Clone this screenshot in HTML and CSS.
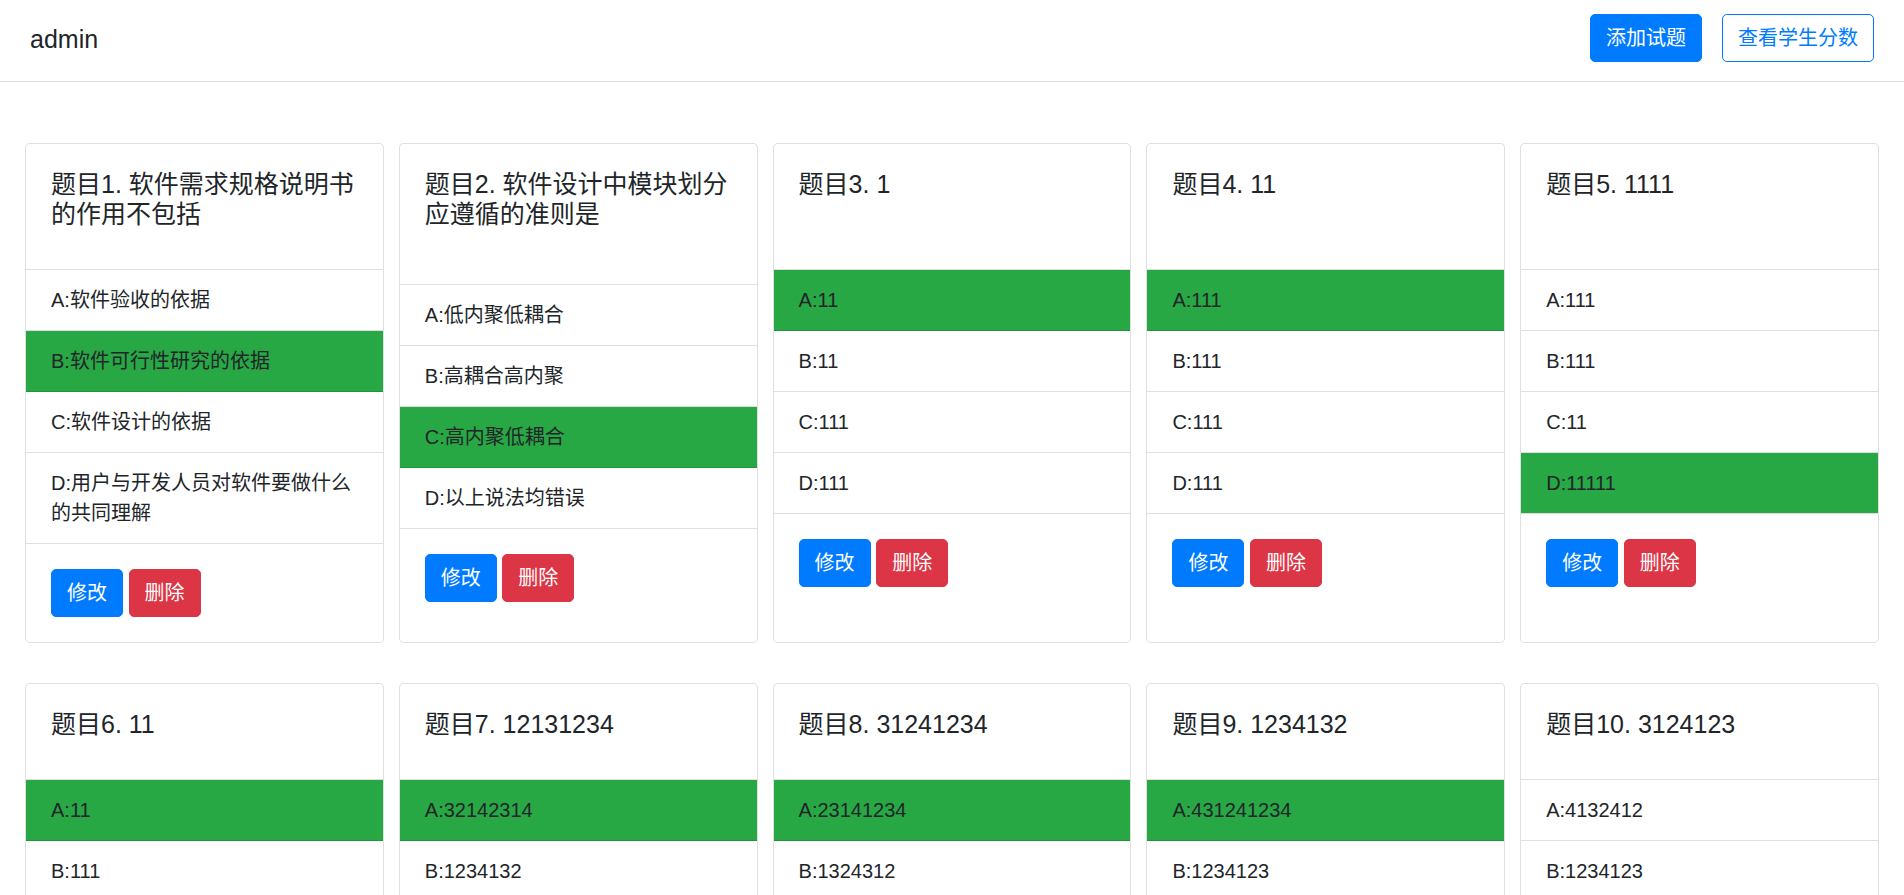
FILE: index.html
```html
<!DOCTYPE html>
<html lang="zh-CN">
<head>
<meta charset="utf-8">
<title>admin</title>
<link rel="stylesheet" href="styles.css">
</head>
<body>
<header class="topbar">
  <div class="brand">admin</div>
  <nav class="actions">
    <button class="btn btn-primary">添加试题</button>
    <button class="btn btn-outline">查看学生分数</button>
  </nav>
</header>
<main class="board">
  <section class="card">
    <div class="card-body"><h5 class="card-title two">题目1. 软件需求规格说明书的作用不包括</h5></div>
    <ul class="options">
      <li class="opt">A:软件验收的依据</li>
      <li class="opt right">B:软件可行性研究的依据</li>
      <li class="opt">C:软件设计的依据</li>
      <li class="opt">D:用户与开发人员对软件要做什么的共同理解</li>
    </ul>
    <div class="card-body"><button class="btn btn-primary">修改</button> <button class="btn btn-danger">删除</button></div>
  </section>
  <section class="card">
    <div class="card-body"><h5 class="card-title twohalf">题目2. 软件设计中模块划分应遵循的准则是</h5></div>
    <ul class="options">
      <li class="opt">A:低内聚低耦合</li>
      <li class="opt">B:高耦合高内聚</li>
      <li class="opt right">C:高内聚低耦合</li>
      <li class="opt">D:以上说法均错误</li>
    </ul>
    <div class="card-body"><button class="btn btn-primary">修改</button> <button class="btn btn-danger">删除</button></div>
  </section>
  <section class="card">
    <div class="card-body"><h5 class="card-title two">题目3. 1</h5></div>
    <ul class="options">
      <li class="opt right">A:11</li>
      <li class="opt">B:11</li>
      <li class="opt">C:111</li>
      <li class="opt">D:111</li>
    </ul>
    <div class="card-body"><button class="btn btn-primary">修改</button> <button class="btn btn-danger">删除</button></div>
  </section>
  <section class="card">
    <div class="card-body"><h5 class="card-title two">题目4. 11</h5></div>
    <ul class="options">
      <li class="opt right">A:111</li>
      <li class="opt">B:111</li>
      <li class="opt">C:111</li>
      <li class="opt">D:111</li>
    </ul>
    <div class="card-body"><button class="btn btn-primary">修改</button> <button class="btn btn-danger">删除</button></div>
  </section>
  <section class="card">
    <div class="card-body"><h5 class="card-title two">题目5. 1111</h5></div>
    <ul class="options">
      <li class="opt">A:111</li>
      <li class="opt">B:111</li>
      <li class="opt">C:11</li>
      <li class="opt right">D:11111</li>
    </ul>
    <div class="card-body"><button class="btn btn-primary">修改</button> <button class="btn btn-danger">删除</button></div>
  </section>

  <section class="card">
    <div class="card-body"><h5 class="card-title">题目6. 11</h5></div>
    <ul class="options">
      <li class="opt right">A:11</li>
      <li class="opt">B:111</li>
    </ul>
    <div class="card-body"><button class="btn btn-primary">修改</button> <button class="btn btn-danger">删除</button></div>
  </section>
  <section class="card">
    <div class="card-body"><h5 class="card-title">题目7. 12131234</h5></div>
    <ul class="options">
      <li class="opt right">A:32142314</li>
      <li class="opt">B:1234132</li>
    </ul>
    <div class="card-body"><button class="btn btn-primary">修改</button> <button class="btn btn-danger">删除</button></div>
  </section>
  <section class="card">
    <div class="card-body"><h5 class="card-title">题目8. 31241234</h5></div>
    <ul class="options">
      <li class="opt right">A:23141234</li>
      <li class="opt">B:1324312</li>
    </ul>
    <div class="card-body"><button class="btn btn-primary">修改</button> <button class="btn btn-danger">删除</button></div>
  </section>
  <section class="card">
    <div class="card-body"><h5 class="card-title">题目9. 1234132</h5></div>
    <ul class="options">
      <li class="opt right">A:431241234</li>
      <li class="opt">B:1234123</li>
    </ul>
    <div class="card-body"><button class="btn btn-primary">修改</button> <button class="btn btn-danger">删除</button></div>
  </section>
  <section class="card">
    <div class="card-body"><h5 class="card-title">题目10. 3124123</h5></div>
    <ul class="options">
      <li class="opt">A:4132412</li>
      <li class="opt">B:1234123</li>
    </ul>
    <div class="card-body"><button class="btn btn-primary">修改</button> <button class="btn btn-danger">删除</button></div>
  </section>
</main>
</body>
</html>
```

FILE: styles.css
```css
* { box-sizing: border-box; }

html, body {
  margin: 0;
  padding: 0;
  background: #fff;
  color: #212529;
  font-family: "Liberation Sans", "Noto Sans CJK SC", sans-serif;
  font-size: 20px;
  line-height: 30px;
}

.topbar {
  display: flex;
  justify-content: space-between;
  align-items: center;
  height: 82px;
  padding: 14px 30px 19px;
  border-bottom: 1px solid #dee2e6;
}

.brand {
  font-size: 25px;
  line-height: 30px;
  padding-top: 2px;
}

.actions {
  display: flex;
  gap: 20px;
}

.btn {
  display: inline-block;
  font-family: inherit;
  font-size: 20px;
  line-height: 30px;
  padding: 8px 15px;
  border: 1px solid transparent;
  border-radius: 5px;
  background: none;
  cursor: pointer;
  vertical-align: middle;
}

.btn-primary { background: #007bff; border-color: #007bff; color: #fff; }
.btn-outline { background: #fff; border-color: #007bff; color: #007bff; }
.btn-danger { background: #dc3545; border-color: #dc3545; color: #fff; }

.board {
  display: grid;
  grid-template-columns: repeat(5, 1fr);
  column-gap: 15px;
  row-gap: 40px;
  padding: 61px 25px 40px;
}

.card {
  display: flex;
  flex-direction: column;
  border: 1px solid rgba(0, 0, 0, 0.125);
  border-radius: 5px;
  background: #fff;
  overflow: hidden;
}

.card-body {
  padding: 25px;
}

.card-title {
  margin: 0 0 15px;
  font-size: 25px;
  line-height: 30px;
  font-weight: 400;
}

.card-title.two { min-height: 60px; }
.card-title.twohalf { min-height: 75px; }

.options {
  list-style: none;
  margin: 0;
  padding: 0;
  border-top: 1px solid rgba(0, 0, 0, 0.125);
  border-bottom: 1px solid rgba(0, 0, 0, 0.125);
}

.opt {
  padding: 15px 25px;
  border-bottom: 1px solid rgba(0, 0, 0, 0.125);
}

.opt:last-child { border-bottom: 0; }

.opt.right { background: #28a745; }
```
